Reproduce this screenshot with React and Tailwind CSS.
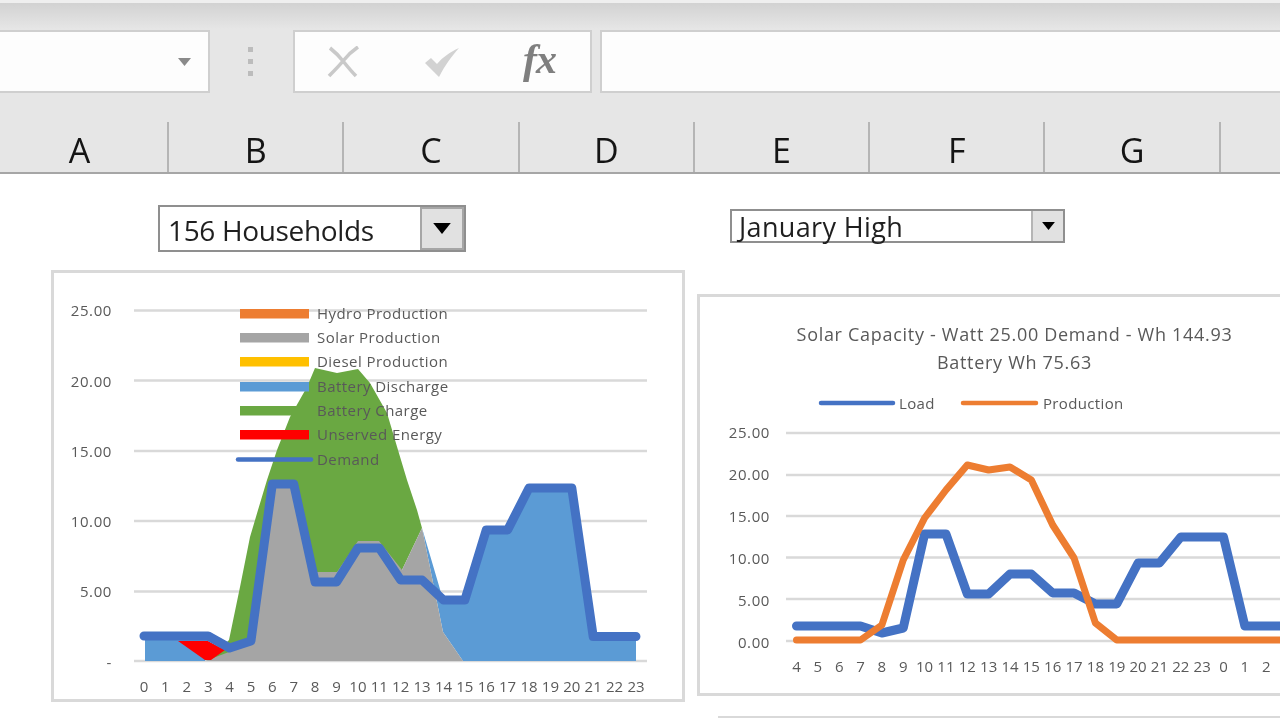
import React from 'react';

const COLS = ['B', 'C', 'D', 'E', 'F', 'G'];

// page coordinates, both chart svgs use a viewBox that starts at the frame corner
const pts = (list) => list.map((p) => p.join(',')).join(' ');

const hours = Array.from({ length: 24 }, (_, i) => i);
const leftX = (i) => 144 + 21.39 * i;
const rightX = (i) => 796.5 + 21.35 * i;

const leftDemand = [636, 636, 636, 636, 648, 641, 484, 484, 582, 582, 548, 548, 580, 580, 600, 600, 530, 530, 488, 488, 488, 636.5, 636.5, 636.5];
const load = [626, 626, 626, 626, 633, 628, 534, 534, 594, 594, 574, 574, 593, 593, 604, 604, 563, 563, 537, 537, 537, 626, 626];
const production = [640, 640, 640, 640, 625, 560, 518, 490, 465, 470, 467, 480, 525, 558, 623, 640, 640, 640, 640, 640, 640, 640, 640];
const rightLabels = [4, 5, 6, 7, 8, 9, 10, 11, 12, 13, 14, 15, 16, 17, 18, 19, 20, 21, 22, 23, 0, 1, 2];

const legend = [
  ['Hydro Production', 309, '#ed7d31', 314],
  ['Solar Production', 333, '#a5a5a5', 338],
  ['Diesel Production', 357, '#ffc000', 362],
  ['Battery Discharge', 382, '#5b9bd5', 387],
  ['Battery Charge', 406, '#6aa842', 411],
  ['Unserved Energy', 430, '#ff0000', 435],
];

const green = [[208, 661], [229, 640], [240, 587], [250, 537], [258, 510], [267, 480], [277, 450], [290, 417], [307, 387], [315, 368], [337, 373], [358, 369], [370, 383], [387, 413], [398, 450], [407, 480], [417, 510], [422, 528], [402, 570], [350, 600], [250, 650]];
const gray = [[205, 661], [229, 652], [251, 641], [272, 484], [294, 484], [315, 572], [337, 572], [358, 541], [379, 541], [402, 570], [422, 528], [443, 632], [463, 661]];
const blueLeft = [[145, 661], [145, 636], [178, 636], [208, 640], [205, 661]];
const blueRight = [[422, 528], [442, 596], [465, 600], [487, 530], [508, 530], [529, 488], [572, 488], [593, 636], [636, 636], [636, 661], [463, 661], [443, 632]];
const red = [[178, 641], [208, 641], [225, 650], [211, 660], [205, 660]];

const DropArrow = ({ w, h }) => (
  <svg width={w} height={h} viewBox="0 0 16 10">
    <path d="M0 0h16L8 10z" fill="#000" />
  </svg>
);

const LeftChart = () => (
  <svg width="628" height="426" viewBox="54 273 628 426" className="block">
    {[310.5, 380.5, 451, 521, 591.5, 661].map((y) => (
      <line key={y} x1="134" x2="647" y1={y} y2={y} stroke="#d9d9d9" strokeWidth="2.5" />
    ))}
    {[['25.00', 316], ['20.00', 387], ['15.00', 457], ['10.00', 527], ['5.00', 597], ['-', 668]].map(([t, y]) => (
      <text key={t} x="112" y={y} textAnchor="end" className="fill-[#595959] text-[15px] tracking-[0.6px]">{t}</text>
    ))}
    <polygon points={pts(blueLeft)} fill="#5b9bd5" />
    <polygon points={pts(blueRight)} fill="#5b9bd5" />
    <polygon points={pts(green)} fill="#6aa842" />
    <polygon points={pts(gray)} fill="#a5a5a5" />
    <polygon points={pts(red)} fill="#ff0000" />
    <polyline
      points={pts(leftDemand.map((y, i) => [leftX(i), y]))}
      fill="none"
      stroke="#4472c4"
      strokeWidth="9"
      strokeLinecap="round"
      strokeLinejoin="round"
    />
    {hours.map((h) => (
      <text key={h} x={leftX(h)} y="692" textAnchor="middle" className="fill-[#595959] text-[15px]">{h}</text>
    ))}
    {legend.map(([label, y, color, mid]) => (
      <g key={label}>
        <rect x="240" y={y} width="69" height="9.5" fill={color} />
        <text x="317" y={mid + 5} className="fill-[#595959] text-[15px] tracking-[0.45px]">{label}</text>
      </g>
    ))}
    <line x1="238" x2="311" y1="459.5" y2="459.5" stroke="#4472c4" strokeWidth="4.5" strokeLinecap="round" />
    <text x="317" y="465" className="fill-[#595959] text-[15px] tracking-[0.45px]">Demand</text>
  </svg>
);

const RightChart = () => (
  <svg width="640" height="396" viewBox="700 297 640 396" className="block">
    {[433, 475, 516, 557.5, 599, 641].map((y) => (
      <line key={y} x1="786" x2="1340" y1={y} y2={y} stroke="#d9d9d9" strokeWidth="2.5" />
    ))}
    {[['25.00', 438], ['20.00', 480], ['15.00', 522], ['10.00', 564], ['5.00', 606], ['0.00', 648]].map(([t, y]) => (
      <text key={t} x="770" y={y} textAnchor="end" className="fill-[#595959] text-[15px] tracking-[0.6px]">{t}</text>
    ))}
    <text x="1014.5" y="341" textAnchor="middle" className="fill-[#595959] text-[18px] tracking-[0.7px]">Solar Capacity - Watt 25.00 Demand - Wh 144.93</text>
    <text x="1014.5" y="369" textAnchor="middle" className="fill-[#595959] text-[18px] tracking-[0.7px]">Battery Wh 75.63</text>
    <line x1="821" x2="893" y1="403" y2="403" stroke="#4472c4" strokeWidth="4.5" strokeLinecap="round" />
    <text x="899" y="409" className="fill-[#595959] text-[15px] tracking-[0.35px]">Load</text>
    <line x1="963" x2="1036" y1="403" y2="403" stroke="#ed7d31" strokeWidth="4.5" strokeLinecap="round" />
    <text x="1043" y="409" className="fill-[#595959] text-[15px] tracking-[0.35px]">Production</text>
    <polyline
      points={pts([...load.map((y, i) => [rightX(i), y]), [1340, 626]])}
      fill="none"
      stroke="#4472c4"
      strokeWidth="9"
      strokeLinecap="round"
      strokeLinejoin="round"
    />
    <polyline
      points={pts([...production.map((y, i) => [rightX(i), y]), [1340, 640]])}
      fill="none"
      stroke="#ed7d31"
      strokeWidth="7"
      strokeLinecap="round"
      strokeLinejoin="round"
    />
    {rightLabels.map((h, i) => (
      <text key={i} x={rightX(i)} y="672" textAnchor="middle" className="fill-[#595959] text-[15px]">{h}</text>
    ))}
  </svg>
);

export default function App() {
  return (
    <div className="w-[1280px] h-[720px] overflow-hidden bg-white blur-[0.5px] font-['Open_Sans',sans-serif]">
      {/* ribbon edge + formula bar */}
      <div className="h-[122px] bg-[#e6e6e6] bg-gradient-to-b from-[#d2d2d2] to-[#e6e6e6] bg-[length:100%_26px] bg-no-repeat border-t-[3px] border-[#efefef] pt-[27px] flex items-start">
        <div className="w-[210px] h-[63px] bg-[#fdfdfd] border-2 border-l-0 border-[#cfcfcf] flex items-center justify-end pr-[19px]">
          <svg width="13" height="8" viewBox="0 0 13 8" className="translate-x-[2px]">
            <path d="M0 0h13L6.5 8z" fill="#8a8a8a" />
          </svg>
        </div>
        <div className="w-[83px] h-[63px] pr-[2px] flex flex-col items-center justify-center gap-[7px]">
          <div className="w-[5px] h-[5px] bg-[#bcbcbc]" />
          <div className="w-[5px] h-[5px] bg-[#bcbcbc]" />
          <div className="w-[5px] h-[5px] bg-[#bcbcbc]" />
        </div>
        <div className="w-[299px] h-[63px] bg-[#fdfdfd] border-2 border-[#cfcfcf] flex items-center">
          <div className="w-[99px] pl-[31px]">
            <svg width="36" height="32" viewBox="0 0 36 32">
              <path d="M4 2c5 4 9 8 13 13C21 10 26 5 32 1M17 15C13 20 8 25 3 30M17 15c4 5 8 10 13 15" fill="none" stroke="#c9c9c9" strokeWidth="3.6" />
            </svg>
          </div>
          <div className="w-[99px] pl-[29px]">
            <svg width="38" height="30" viewBox="0 0 38 30">
              <path d="M2 16l6-5 6 6C20 10 27 5 36 1 29 9 22 18 16 30z" fill="#d2d2d2" />
            </svg>
          </div>
          <span className="font-['Liberation_Serif',serif] italic font-bold text-[42px] leading-none tracking-[-1px] text-[#7f7f7f] pl-[30px] -mt-[6px]">fx</span>
        </div>
        <div className="ml-[8px] flex-1 h-[63px] bg-[#fdfdfd] border-y-2 border-l-2 border-[#cfcfcf]" />
      </div>

      {/* column headers */}
      <div className="h-[52px] bg-[#e6e6e6] border-b-2 border-[#a6a6a6] flex text-[#141414]">
        <div className="w-[169px] pr-[8px] border-r-2 border-[#b5b5b5] flex justify-center items-end text-[34px] leading-[44px]">A</div>
        {COLS.map((c) => (
          <div key={c} className="w-[175.3px] border-r-2 border-[#b5b5b5] flex justify-center items-end text-[34px] leading-[44px]">{c}</div>
        ))}
      </div>

      <div className="flex">
        {/* left column */}
        <div className="w-[685px] pl-[51px] shrink-0">
          <div className="ml-[107px] mt-[31px] w-[308px] h-[47px] border-2 border-[#8f8f8f] flex items-center bg-white">
            <span className="flex-1 pl-[8px] pt-[2px] text-[28px] text-[#1f1f1f] tracking-[-0.35px]">156 Households</span>
            <div className="w-[44px] h-full bg-[#e1e1e1] border-2 border-[#a6a6a6] flex items-center justify-center">
              <DropArrow w={18} h={11} />
            </div>
          </div>
          <div className="mt-[18px] w-[634px] h-[432px] border-[3px] border-[#d9d9d9]">
            <LeftChart />
          </div>
        </div>

        {/* right column */}
        <div className="pl-[12px] flex-1 min-w-0">
          <div className="ml-[33px] mt-[35px] w-[335px] h-[34px] border-2 border-[#8f8f8f] flex items-center bg-white">
            <span className="flex-1 pl-[7px] pt-[2px] text-[27px] text-[#1f1f1f] tracking-[0.35px]">January High</span>
            <div className="w-[32px] h-full bg-[#e1e1e1] border-l-2 border-[#b5b5b5] flex items-center justify-center">
              <DropArrow w={13} h={8} />
            </div>
          </div>
          <div className="mt-[51px] w-[640px] h-[402px] border-[3px] border-[#d9d9d9]">
            <RightChart />
          </div>
          <div className="mt-[20px] ml-[21px] border-t-2 border-[#d9d9d9]" />
        </div>
      </div>
    </div>
  );
}
